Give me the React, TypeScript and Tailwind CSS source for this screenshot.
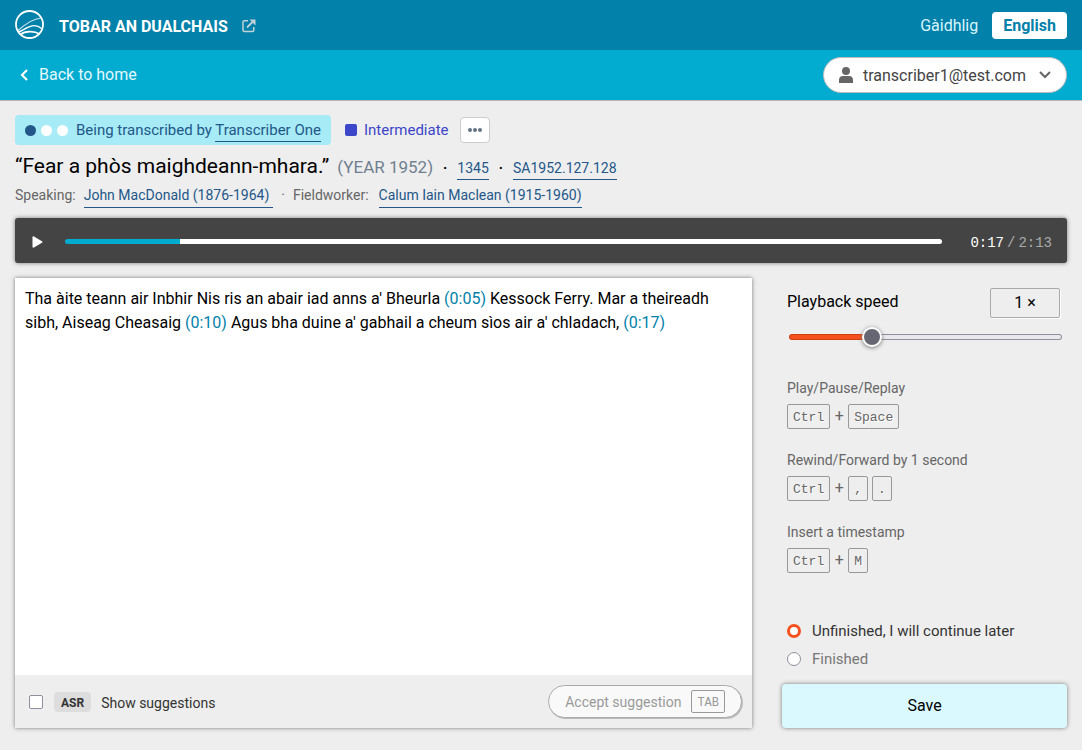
import { useState } from 'react'

const shortcuts = [
  { label: 'Play/Pause/Replay', keys: ['Space'] },
  { label: 'Rewind/Forward by 1 second', keys: [',', '.'] },
  { label: 'Insert a timestamp', keys: ['M'] },
]

const linkStyle = 'border-b border-[#235789] text-[#235789]'

function Logo() {
  return (
    <svg viewBox="0 0 30 30" className="size-[30px]" fill="none" stroke="#fff" aria-hidden="true">
      <circle cx="14.500" cy="14.500" r="13.5" strokeWidth="1.8" />
      <path d="M3 20.500C8 16 16 9 26 8" strokeWidth="1.1" opacity=".8" />
      <path d="M3.500 22C9 20.500 18 11 26.500 18.500" strokeWidth="1.4" />
      <path d="M5.500 24.500C10 21 19 20.500 24.500 24" strokeWidth="1.8" />
    </svg>
  )
}

function ExternalIcon() {
  return (
    <svg viewBox="0 0 14 14" className="size-3.5" fill="none" stroke="#c4d2d8" strokeWidth="1.5" aria-hidden="true">
      <path d="M6 1.800H2.300c-.8 0-1.300.5-1.300 1.300v8.200c0 .8.500 1.300 1.300 1.300h8.200c.8 0 1.300-.5 1.300-1.300V8" />
      <path d="M5 8.500 11.500 2" strokeWidth="1.8" />
      <path d="M7.500 .5h6V6.500z" fill="#c4d2d8" stroke="none" />
    </svg>
  )
}

function Key({ name }: { name: string }) {
  return (
    <kbd className="flex h-[25px] items-center rounded-[2px] border border-[#999] px-[5px] pt-1 font-['Liberation_Mono',monospace] text-[13px] text-[#666] [text-shadow:1px_1px_0_#fff]">
      {name}
    </kbd>
  )
}

function Timestamp({ time }: { time: string }) {
  return <span className="text-[#0281aa]">{`(${time})`}</span>
}

function Header() {
  return (
    <header>
      <div className="flex h-[50px] items-center justify-between bg-[#0281aa] px-[15px] text-white">
        <a href="#" className="flex items-center">
          <Logo />
          <span className="ml-3.5 pt-[3px] text-base font-bold">TOBAR AN DUALCHAIS</span>
          <span className="ml-3.5 pt-[2px]">
            <ExternalIcon />
          </span>
        </a>
        <nav className="flex items-center gap-3.5 text-base">
          <a href="#gd" className="pt-[2px] text-[#d9f6fc]">Gàidhlig</a>
          <a href="#en" className="flex h-[27px] items-center rounded bg-white px-[11px] pt-[2px] font-bold text-[#0281aa]">English</a>
        </nav>
      </div>
      <div className="flex h-[51px] items-center justify-between border-b border-[#b5b5b5] bg-[#02abd0] px-[15px]">
        <a href="#home" className="flex items-center text-base text-[#e3f9fd]">
          <svg viewBox="0 0 8 12" className="ml-[5px] h-3 w-2" fill="none" stroke="#fff" strokeWidth="2.2" aria-hidden="true">
            <path d="M7 1 2 6l5 5" />
          </svg>
          <span className="ml-[11px]">Back to home</span>
        </a>
        <button className="flex h-9 items-center rounded-full border border-[#bbb] bg-white px-[15px] text-base text-[#444]">
          <svg viewBox="0 0 14 16" className="h-4 w-3.5" fill="#666" aria-hidden="true">
            <circle cx="7" cy="4" r="4" />
            <path d="M0 16v-3c0-2.500 1.500-4 4-4h6c2.500 0 4 1.500 4 4v3z" />
          </svg>
          <span className="ml-2.5 pt-[2px]">transcriber1@test.com</span>
          <svg viewBox="0 0 12 8" className="ml-[13px] h-2 w-3" fill="none" stroke="#666" strokeWidth="2" aria-hidden="true">
            <path d="m1 1 5 5 5-5" />
          </svg>
        </button>
      </div>
    </header>
  )
}

function RecordingInfo() {
  return (
    <section className="flex flex-col items-start text-sm">
      <div className="flex items-center text-[15px]">
        <div className="flex h-[30px] items-center rounded bg-[#a6ebf5] px-2.5 text-[#235789]">
          <span className="flex gap-[5px]">
            <span className="size-[11px] rounded-full bg-[#235789]" />
            <span className="size-[11px] rounded-full bg-white" />
            <span className="size-[11px] rounded-full bg-white" />
          </span>
          <span className="ml-2 pt-[2px]">
            Being transcribed by <a href="#user" className={`${linkStyle} pb-[2px]`}>Transcriber One</a>
          </span>
        </div>
        <span className="ml-3.5 size-3 rounded-[2px] bg-[#3c46c8]" />
        <span className="ml-[7px] pt-[2px] text-[#3c46c8]">Intermediate</span>
        <button aria-label="More" className="ml-[11px] flex h-[26px] w-[30px] items-center justify-center gap-px rounded border border-[#ccc] bg-white">
          <span className="size-1 rounded-full bg-[#647484]" />
          <span className="size-1 rounded-full bg-[#647484]" />
          <span className="size-1 rounded-full bg-[#647484]" />
        </button>
      </div>
      <div className="mt-1.5 flex h-8 items-baseline">
        <h1 className="text-[21px] leading-[30px] text-black">“Fear a phòs maighdeann-mhara.”</h1>
        <span className="ml-2 text-[17px] text-[#708090]">(YEAR 1952)</span>
        <span className="mx-2.5 font-bold">·</span>
        <a href="#1345" className={`${linkStyle} pb-px`}>1345</a>
        <span className="mx-2.5 font-bold">·</span>
        <a href="#track" className={`${linkStyle} pb-px`}>SA1952.127.128</a>
      </div>
      <div className="flex h-6 items-baseline leading-6 text-[#666]">
        Speaking:
        <a href="#speaker" className={`${linkStyle} ml-2 pr-1`}>John MacDonald (1876-1964)</a>
        <span className="mx-2">·</span>
        Fieldworker:
        <a href="#fieldworker" className={`${linkStyle} ml-2.5`}>Calum Iain Maclean (1915-1960)</a>
      </div>
    </section>
  )
}

function Player() {
  const [position, setPosition] = useState(17)
  const percent = (position / 130) * 100

  return (
    <section className="mt-[11px] flex h-[45px] items-center rounded-[3px] bg-[#444] px-[15px] pt-[2px] shadow-[0_0_4px_#777]">
      <button aria-label="Play" className="w-[15px]">
        <svg viewBox="0 0 11 12" className="ml-[2px] h-3 w-[11px]" fill="#fff" aria-hidden="true">
          <path d="M.5 1.200C.5.3 1.200 0 2 .4l8 4.800c.6.400.6 1.200 0 1.600l-8 4.800c-.8.400-1.500 0-1.500-.8z" />
        </svg>
      </button>
      <input
        type="range"
        aria-label="Position"
        min={0}
        max={130}
        value={position}
        onChange={(e) => setPosition(Number(e.target.value))}
        className="ml-5 h-[5px] min-w-0 flex-1 appearance-none rounded-full [&::-webkit-slider-thumb]:opacity-0"
        style={{ background: `linear-gradient(to right, #02abd0 ${percent}%, #fff ${percent}%)` }}
      />
      <span className="ml-7 flex gap-[3px] pt-[2px] font-['Liberation_Mono',monospace] text-sm text-[#aaa]">
        <span className="text-white">0:17</span>
        <span>/</span>
        <span>2:13</span>
      </span>
    </section>
  )
}

function Editor() {
  return (
    <section className="flex min-w-0 flex-1 flex-col bg-white shadow-[0_0_4px_#777]">
      <div className="flex-1 px-2.5 py-[9px] text-base leading-6 text-black" contentEditable suppressContentEditableWarning>
        Tha àite teann air Inbhir Nis ris an abair iad anns a' Bheurla <Timestamp time="0:05" /> Kessock Ferry. Mar a
        theireadh sibh, Aiseag Cheasaig <Timestamp time="0:10" /> Agus bha duine a' gabhail a cheum sìos air a'
        chladach, <Timestamp time="0:17" />
      </div>
      <div className="flex h-[53px] items-center justify-between bg-[#eee] pr-2.5 pl-3.5">
        <label className="flex items-center text-sm text-[#333]">
          <input type="checkbox" className="size-3.5 appearance-none rounded-[2px] border border-[#8f8f9d] bg-white checked:bg-[#f4511e]" />
          <span className="ml-[11px] flex h-5 items-center rounded bg-[#ddd] px-[7px] pt-[2px] text-xs font-bold">ASR</span>
          <span className="ml-2.5 pt-[2px]">Show suggestions</span>
        </label>
        <button className="flex h-[33px] items-center gap-2.5 rounded-full border border-[#aaa] bg-[#f9f9f9] px-4 text-sm text-[#999] shadow-[1px_1px_0_#bbb]">
          Accept suggestion
          <kbd className="flex h-[23px] items-center rounded-[2px] border border-[#999] px-[5px] pt-[2px] font-['Liberation_Mono',monospace] text-xs">
            TAB
          </kbd>
        </button>
      </div>
    </section>
  )
}

function PlaybackSpeed() {
  const [speed, setSpeed] = useState(1)
  const percent = ((speed - 0.5) / 1.75) * 100

  return (
    <div className="pt-2.5 pl-[5px]">
      <div className="flex items-center justify-between pr-[7px] text-base text-black">
        <label htmlFor="speed" className="pb-[2px]">Playback speed</label>
        <output htmlFor="speed" className="flex h-[30px] w-[70px] items-center justify-center rounded-[2px] border border-[#aaa] shadow-[1px_1px_0_#fff]">
          {`${speed} ×`}
        </output>
      </div>
      <div className="mt-[7px] flex h-6 items-center pr-[5px] pl-[2px]">
        <input
          id="speed"
          type="range"
          min={0.5}
          max={2.25}
          step={0.25}
          value={speed}
          onChange={(e) => setSpeed(Number(e.target.value))}
          className="h-1.5 w-full appearance-none rounded-full border border-transparent [&::-webkit-slider-thumb]:size-5 [&::-webkit-slider-thumb]:appearance-none [&::-webkit-slider-thumb]:rounded-full [&::-webkit-slider-thumb]:border-2 [&::-webkit-slider-thumb]:border-white [&::-webkit-slider-thumb]:bg-[#666673] [&::-webkit-slider-thumb]:shadow-[0_1px_4px_#777]"
          style={{
            background: `linear-gradient(to right, #f4511e ${percent}%, #e9e9ed ${percent}%) padding-box, linear-gradient(to right, #d1410f ${percent}%, #8f8f9d ${percent}%) border-box`,
          }}
        />
      </div>
    </div>
  )
}

function StatusOptions() {
  const [status, setStatus] = useState('unfinished')
  const radio = 'size-3.5 appearance-none rounded-full border border-[#8f8f9d] bg-white checked:border-[3px] checked:border-[#f4511e]'

  return (
    <div className="flex flex-col gap-2 pl-[5px] text-[15px]">
      <label className="flex h-5 items-center gap-[11px] text-[#333]">
        <input type="radio" name="status" checked={status === 'unfinished'} onChange={() => setStatus('unfinished')} className={radio} />
        Unfinished, I will continue later
      </label>
      <label className="flex h-5 items-center gap-[11px] text-[#777]">
        <input type="radio" name="status" checked={status === 'finished'} onChange={() => setStatus('finished')} className={radio} />
        Finished
      </label>
    </div>
  )
}

function Sidebar() {
  return (
    <aside className="flex w-[285px] shrink-0 flex-col">
      <PlaybackSpeed />
      <div className="mt-[29px] flex flex-col gap-[21px] pl-[5px] text-sm text-[#666]">
        {shortcuts.map((shortcut) => (
          <div key={shortcut.label}>
            <p className="leading-5">{shortcut.label}</p>
            <div className="mt-1.5 flex gap-1">
              <Key name="Ctrl" />
              <span className="w-2.5 text-center text-base">+</span>
              {shortcut.keys.map((key) => (
                <Key key={key} name={key} />
              ))}
            </div>
          </div>
        ))}
      </div>
      <div className="mt-auto pt-6">
        <StatusOptions />
        <button className="mt-[15px] h-11 w-full rounded bg-[#d9f9fe] text-base text-black shadow-[0_0_4px_#777]">Save</button>
      </div>
    </aside>
  )
}

export default function App() {
  return (
    <div className="flex min-h-screen flex-col bg-[#eee] font-[Roboto,sans-serif]">
      <Header />
      <main className="flex flex-1 flex-col px-[15px] pt-3.5 pb-[22px]">
        <RecordingInfo />
        <Player />
        <div className="mt-[15px] flex flex-1 gap-[30px]">
          <Editor />
          <Sidebar />
        </div>
      </main>
    </div>
  )
}
